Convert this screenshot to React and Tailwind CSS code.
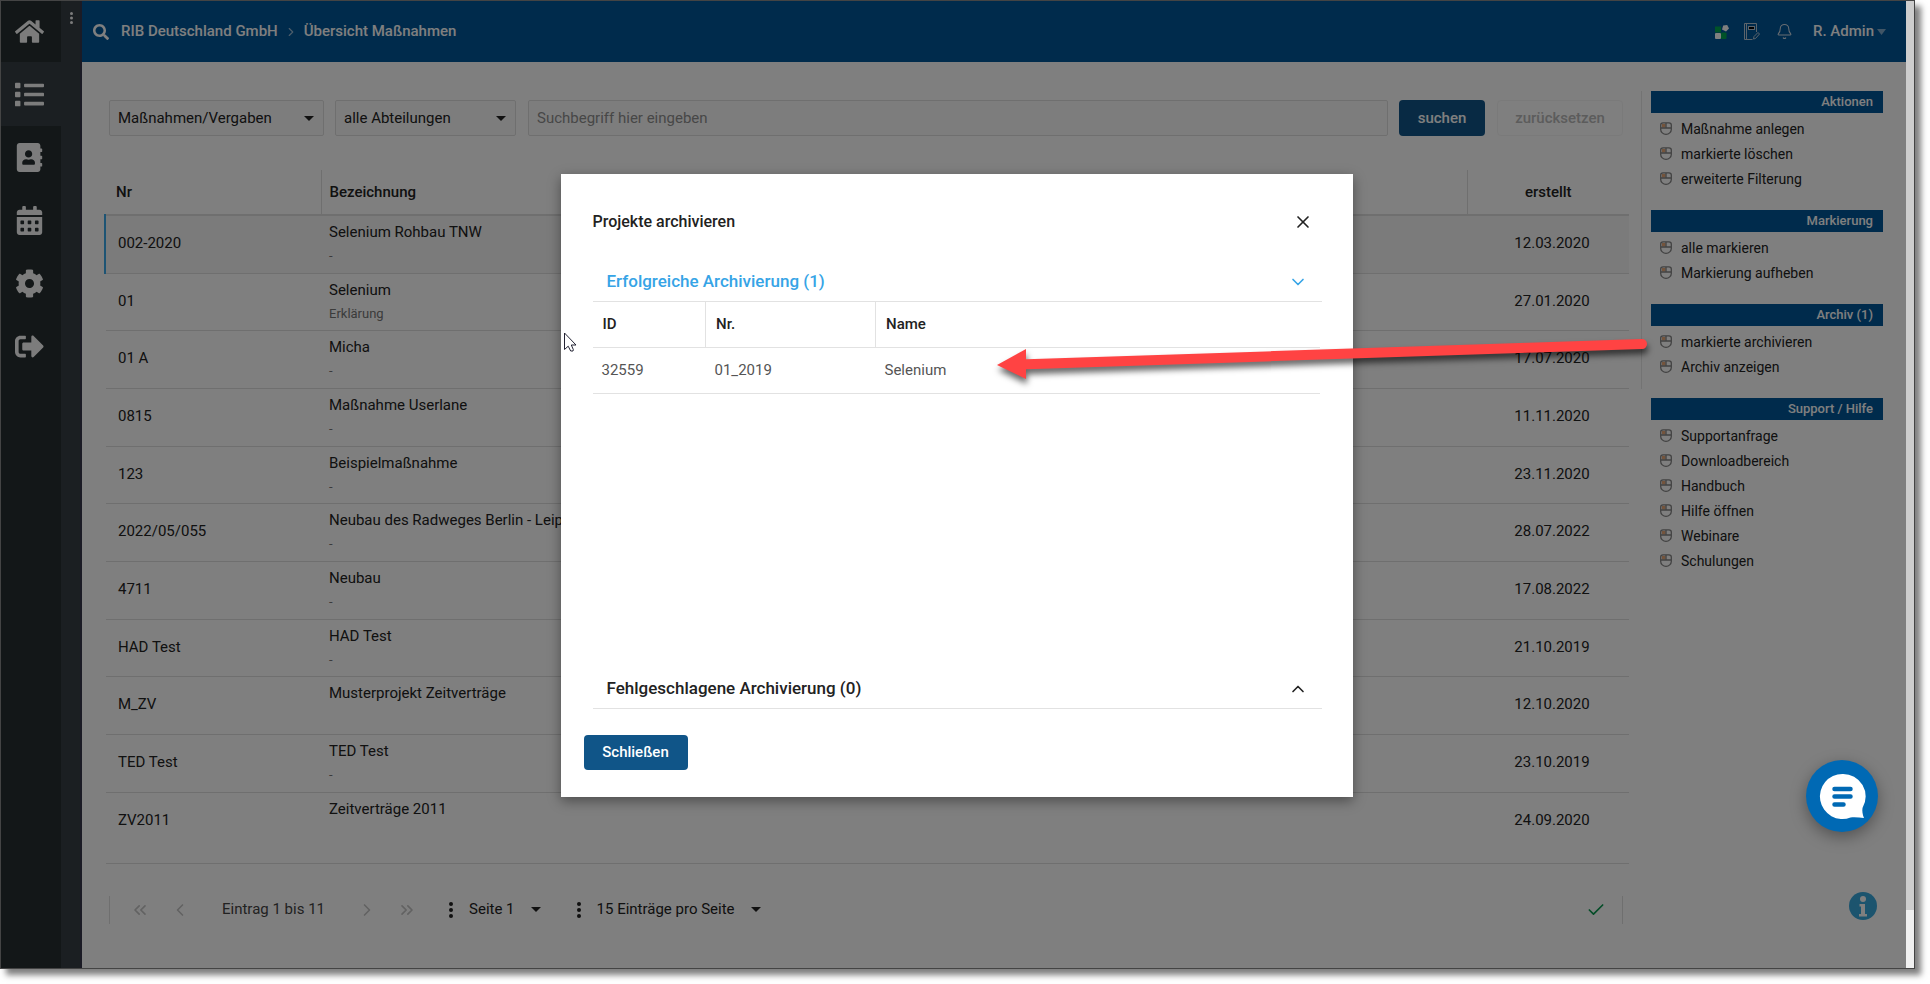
import React from 'react';
import {
  FaSearch,
  FaHome,
  FaList,
  FaAddressBook,
  FaCalendarAlt,
  FaCog,
  FaSignOutAlt,
} from 'react-icons/fa';
import { Bell, Check, ChevronDown, ChevronLeft, ChevronRight, ChevronUp, ChevronsLeft, ChevronsRight, X } from 'lucide-react';

const navItems = [
  { label: 'Start', icon: FaHome },
  { label: 'Übersicht', icon: FaList, active: true },
  { label: 'Kontakte', icon: FaAddressBook },
  { label: 'Kalender', icon: FaCalendarAlt },
  { label: 'Einstellungen', icon: FaCog },
  { label: 'Abmelden', icon: FaSignOutAlt },
];

const rows = [
  { nr: '002-2020', name: 'Selenium Rohbau TNW', info: '-', date: '12.03.2020', selected: true },
  { nr: '01', name: 'Selenium', info: 'Erklärung', date: '27.01.2020' },
  { nr: '01 A', name: 'Micha', info: '-', date: '17.07.2020' },
  { nr: '0815', name: 'Maßnahme Userlane', info: '-', date: '11.11.2020' },
  { nr: '123', name: 'Beispielmaßnahme', info: '-', date: '23.11.2020' },
  { nr: '2022/05/055', name: 'Neubau des Radweges Berlin - Leipzig', info: '-', date: '28.07.2022' },
  { nr: '4711', name: 'Neubau', info: '-', date: '17.08.2022' },
  { nr: 'HAD Test', name: 'HAD Test', info: '-', date: '21.10.2019' },
  { nr: 'M_ZV', name: 'Musterprojekt Zeitverträge', info: '', date: '12.10.2020' },
  { nr: 'TED Test', name: 'TED Test', info: '-', date: '23.10.2019' },
  { nr: 'ZV2011', name: 'Zeitverträge 2011', info: '', date: '24.09.2020' },
];

const sections = [
  { title: 'Aktionen', items: ['Maßnahme anlegen', 'markierte löschen', 'erweiterte Filterung'] },
  { title: 'Markierung', items: ['alle markieren', 'Markierung aufheben'] },
  { title: 'Archiv (1)', items: ['markierte archivieren', 'Archiv anzeigen'] },
  {
    title: 'Support / Hilfe',
    items: ['Supportanfrage', 'Downloadbereich', 'Handbuch', 'Hilfe öffnen', 'Webinare', 'Schulungen'],
  },
];

const Caret = ({ className }) => (
  <svg viewBox="0 0 10 5" className={className} fill="currentColor" preserveAspectRatio="none" aria-hidden="true">
    <path d="M0 0h10L5 5z" />
  </svg>
);

const Dots = ({ className }) => (
  <svg viewBox="0 0 4 16" className={className} fill="currentColor" aria-hidden="true">
    <circle cx="2" cy="2" r="2" />
    <circle cx="2" cy="8" r="2" />
    <circle cx="2" cy="14" r="2" />
  </svg>
);

const MouseIcon = () => (
  <svg viewBox="0 0 12 13" className="h-[13px] w-3" fill="none" aria-hidden="true">
    <path d="M2 2h3.500v3.500H2z" fill="#e8a878" />
    <path d="M3 .8h6Q11.300.8 11.300 3v4.500a5.300 4.800 0 0 1-10.600 0V3Q.7.8 3 .8z" stroke="#858585" strokeWidth="1.300" />
    <path d="M1 6h10M6 1v5" stroke="#858585" strokeWidth="1.300" />
  </svg>
);

const Sidebar = () => (
  <aside className="flex shrink-0 bg-[#373f45] text-[#f8f8f8]">
    <nav className="w-[60px] bg-[#262f30]">
      {navItems.map(({ label, icon: Icon, active }) => (
        <button
          key={label}
          aria-label={label}
          className={`flex w-full items-center justify-center pr-1 first:h-[61px] ${active ? 'h-16 bg-[#373f45]' : 'h-[63px]'}`}
        >
          <Icon className="h-[29px] w-[29px]" />
        </button>
      ))}
    </nav>
    <div className="flex w-[21px] justify-center border-r-2 border-[#37374a] pt-[11px] pl-0.5">
      <Dots className="h-3 w-[3px]" />
    </div>
  </aside>
);

const TopBar = () => (
  <header className="flex h-[61px] items-center bg-[#005699] pr-5 pl-[11px] font-medium text-white">
    <FaSearch className="h-4 w-4" />
    <a href="#rib" className="ml-3">RIB Deutschland GmbH</a>
    <ChevronRight className="mx-1.5 h-3.5 w-3.5 opacity-60" />
    <a href="#massnahmen">Übersicht Maßnahmen</a>
    <div className="ml-auto flex items-center">
      <button aria-label="Apps">
        <svg viewBox="0 0 14 14" className="h-3.5 w-3.5">
          <rect x="0" y="1.500" width="6" height="6" fill="#00a651" />
          <rect x="0" y="8" width="6" height="6" rx="1" fill="#fff" />
          <rect x="6" y="7.500" width="5.500" height="6.500" rx="1" fill="#00a651" />
          <path d="M8.200.6l4-.6L14 3.600l-3 2.900-4-2z" fill="#fff" />
        </svg>
      </button>
      <button aria-label="Notizen" className="ml-[15px]">
        <svg viewBox="0 0 16 17" className="h-[17px] w-4" fill="none" stroke="#b9c8d6">
          <path d="M12.500 9V.5H.5v16h8M2.500.5v16" />
          <rect x="4.500" y="3.500" width="6" height="3" fill="#000" />
          <path d="M9.500 16l.5-2.500L14 9.500l1.500 1.500L11.500 15.500z" />
        </svg>
      </button>
      <button aria-label="Mitteilungen" className="ml-4 text-[#d0dae4]">
        <Bell className="h-[17px] w-[17px]" strokeWidth={1.5} />
      </button>
      <button className="ml-5 flex items-center gap-[3px]">
        R. Admin
        <Caret className="h-1.5 w-[9px] opacity-50" />
      </button>
    </div>
  </header>
);

const Filter = ({ label, value, className }) => (
  <div className={`relative ${className}`}>
    <select aria-label={label} className="h-9 w-full appearance-none rounded-xs border border-[#dedede] bg-[#fbfbfb] px-2">
      <option>{value}</option>
    </select>
    <Caret className="pointer-events-none absolute top-4 right-2.5 h-[5px] w-[10px]" />
  </div>
);

const FilterBar = () => (
  <form className="flex items-center pr-1.5 pl-[5px]">
    <Filter label="Typ" value="Maßnahmen/Vergaben" className="w-[215px]" />
    <Filter label="Abteilung" value="alle Abteilungen" className="ml-[11px] w-[181px]" />
    <input
      aria-label="Suchbegriff"
      placeholder="Suchbegriff hier eingeben"
      className="ml-3 h-9 min-w-0 flex-1 rounded-xs border border-[#dedede] bg-[#fbfbfb] px-2 placeholder:text-[#8f8f8f]"
    />
    <button type="button" className="ml-[11px] h-9 w-[86px] rounded-sm bg-[#105588] font-medium text-white">
      suchen
    </button>
    <button type="button" className="ml-3 h-9 w-[126px] rounded-sm border border-[#f5f5f5] font-medium text-[#b8b8b8]">
      zurücksetzen
    </button>
  </form>
);

const ProjectTable = () => (
  <table className="mt-[34px] w-full table-fixed border-collapse">
    <colgroup>
      <col className="w-[216px]" />
      <col />
      <col className="w-[162px]" />
    </colgroup>
    <thead>
      <tr className="h-[45px] border-b-2 border-[#dedede]">
        <th className="pl-[11px] text-left font-medium">Nr</th>
        <th className="border-l border-[#dedede] pl-2 text-left font-medium">Bezeichnung</th>
        <th className="border-l border-[#dedede] font-medium">erstellt</th>
      </tr>
    </thead>
    <tbody>
      {rows.map((row) => (
        <tr
          key={row.nr}
          className={`h-[58px] border-b border-[#dedede] nth-[3n+2]:h-[57px] last:h-[71px]! ${row.selected ? 'bg-[#f6f6f6]' : ''}`}
        >
          <td className={`border-l-2 pl-3 align-top ${row.selected ? 'border-l-[#3aa8e8]' : 'border-l-transparent'}`}>
            <div className="pt-[17px] leading-5">{row.nr}</div>
          </td>
          <td className="pt-1.5 pl-2 align-top whitespace-nowrap">
            <div className="leading-5">{row.name}</div>
            <div className="mt-1 text-[13px] leading-5 text-[#777]">{row.info}</div>
          </td>
          <td className="pl-2 text-center align-top">
            <div className="pt-[17px] leading-5">{row.date}</div>
          </td>
        </tr>
      ))}
    </tbody>
  </table>
);

const Pagination = () => (
  <div className="mt-8 mr-1.5 ml-[5px] flex h-7 items-center border-x border-[#dedede] pr-4">
    <button aria-label="Erste Seite" className="ml-5 text-[#c4c4c4]"><ChevronsLeft className="h-5 w-5" /></button>
    <button aria-label="Zurück" className="ml-5 text-[#c4c4c4]"><ChevronLeft className="h-5 w-5" /></button>
    <span className="mx-8 text-[#444]">Eintrag 1 bis 11</span>
    <button aria-label="Weiter" className="text-[#c4c4c4]"><ChevronRight className="h-5 w-5" /></button>
    <button aria-label="Letzte Seite" className="ml-5 text-[#c4c4c4]"><ChevronsRight className="h-5 w-5" /></button>
    <button className="ml-8 flex items-center">
      <Dots className="mr-4 h-4 w-1" />
      Seite 1
      <Caret className="ml-4 h-[5px] w-[10px]" />
    </button>
    <button className="ml-9 flex items-center">
      <Dots className="mr-4 h-4 w-1" />
      15 Einträge pro Seite
      <Caret className="ml-4 h-[5px] w-[10px]" />
    </button>
    <Check className="ml-auto h-5 w-5 text-[#0a9a50]" />
  </div>
);

const ActionPanel = () => (
  <aside className="w-[242px] shrink-0">
    <div className="-mb-[298px] h-[298px] border-l border-[#e6e6e6]" />
    <div className="ml-2.5 flex flex-col gap-[19px]">
      {sections.map((section) => (
        <section key={section.title}>
          <h2 className="h-[22px] bg-[#005699] pr-2.5 text-right text-[13px] leading-[22px] font-medium text-white">
            {section.title}
          </h2>
          <ul className="mt-[3px] text-sm">
            {section.items.map((item) => (
              <li key={item} className="h-[25px]">
                <a href="#aktion" className="flex h-full items-center gap-[9px] pl-[9px]">
                  <MouseIcon />
                  {item}
                </a>
              </li>
            ))}
          </ul>
        </section>
      ))}
    </div>
  </aside>
);

const ArchiveDialog = () => (
  <div role="dialog" aria-label="Projekte archivieren" className="w-[792px] bg-white px-8 pt-8 pb-[27px] shadow-[0_4px_12px_rgba(0,0,0,0.4)]">
    <div className="flex h-8 items-center justify-between pr-2">
      <h1 className="text-base font-medium">Projekte archivieren</h1>
      <button aria-label="Dialog schließen"><X className="h-5 w-5" /></button>
    </div>
    <button className="mt-6 flex h-10 w-[729px] items-center justify-between border-b border-[#e2e2e2] pr-3.5 pl-3.5 text-[17px] font-medium text-[#36a4e6]">
      Erfolgreiche Archivierung (1)
      <ChevronDown className="h-5 w-5" />
    </button>
    <div className="h-[367px]">
      <table className="w-[727px] border-collapse">
        <thead>
          <tr className="h-[45px] border-b border-[#e2e2e2] text-left">
            <th className="w-[113px] pl-2.5 font-medium">ID</th>
            <th className="w-[170px] border-l border-[#e2e2e2] pl-2.5 font-medium">Nr.</th>
            <th className="border-l border-[#e2e2e2] pl-2.5 font-medium">Name</th>
          </tr>
        </thead>
        <tbody>
          <tr className="h-[46px] border-b border-[#e2e2e2] text-[#555]">
            <td className="pl-[9px]">32559</td>
            <td className="pl-[9px]">01_2019</td>
            <td className="pl-[9px]">Selenium</td>
          </tr>
        </tbody>
      </table>
    </div>
    <button className="flex h-10 w-[729px] items-center justify-between border-b border-[#e2e2e2] pr-3.5 pl-3.5 text-[17px] font-medium">
      Fehlgeschlagene Archivierung (0)
      <ChevronUp className="h-5 w-5" />
    </button>
    <button className="mt-[26px] -ml-[9px] block h-[35px] w-[104px] rounded-sm bg-[#105588] font-medium text-white">
      Schließen
    </button>
  </div>
);

// red pointer from the action link to the archived entry
const RedArrow = () => (
  <svg viewBox="0 0 660 50" className="absolute top-[334px] left-[994px] h-[50px] w-[660px] drop-shadow-[1px_5px_3px_rgba(0,0,0,0.6)]">
    <path d="M24 29.500L647 9" stroke="#ff4343" strokeWidth="10" strokeLinecap="round" />
    <path d="M2 30L31 14v30z" fill="#ff4343" />
  </svg>
);

const Cursor = () => (
  <svg viewBox="0 0 13 20" className="absolute top-[331px] left-[563px] h-5 w-[13px]">
    <path d="M.5 1v16.500l3.700-3.300 2.500 4.800h2.300l.3-1.500-2-4.500H12z" fill="#fff" stroke="#223" />
  </svg>
);

export default function App() {
  return (
    <div className="flex h-screen bg-white pr-[15px] pb-[15px] font-['Roboto',sans-serif] text-[15px] text-[#222]">
      <div className="relative flex min-w-0 flex-1 border border-[#444] shadow-[6px_6px_6px_rgba(0,0,0,0.5)]">
        <div className="relative flex min-w-0 flex-1 bg-white">
          <Sidebar />
          <div className="flex min-w-0 flex-1 flex-col">
            <TopBar />
            <main className="flex min-h-0 flex-1 gap-3 pt-[29px] pr-[23px] pl-[22px]">
              <div className="min-w-0 flex-1 pt-[9px]">
                <FilterBar />
                <ProjectTable />
                <Pagination />
              </div>
              <ActionPanel />
            </main>
          </div>
          <button aria-label="Information" className="absolute right-[29px] bottom-12 h-7 w-7">
            <svg viewBox="0 0 28 28">
              <circle cx="14" cy="14" r="14" fill="#38a8dd" />
              <circle cx="14" cy="7" r="3" fill="#fff" />
              <path d="M10.500 12h5.500v10h2v2.500h-8V22h2v-7.500h-1.500z" fill="#fff" />
            </svg>
          </button>
          <div className="absolute inset-0 bg-black/50" />
        </div>
        <div className="flex w-2 flex-col bg-[#f0f0f0]">
          <div className="h-[94%] bg-[#cdcdcd]" />
        </div>
        <div className="absolute inset-0 flex items-center justify-center pt-0.5 pr-0.5">
          <ArchiveDialog />
        </div>
        <button
          aria-label="Chat öffnen"
          className="absolute right-9 bottom-[136px] h-[72px] w-[72px] rounded-full bg-[#0069b4] shadow-[0_5px_16px_rgba(0,0,0,0.35)]"
        >
          <svg viewBox="0 0 72 72" fill="none">
            <path d="M36.500 14a22.500 22.500 0 1 0 8 43.500c4-.5 9 0 13.500.5-1.500-3.500-2-7-1.500-10A22.500 22.500 0 0 0 36.500 14z" fill="#fff" />
            <path d="M28.500 29h16M28.500 36.500h16M28.500 44.500h9" stroke="#0069b4" strokeWidth="4.500" strokeLinecap="round" />
          </svg>
        </button>
        <RedArrow />
        <Cursor />
      </div>
    </div>
  );
}
